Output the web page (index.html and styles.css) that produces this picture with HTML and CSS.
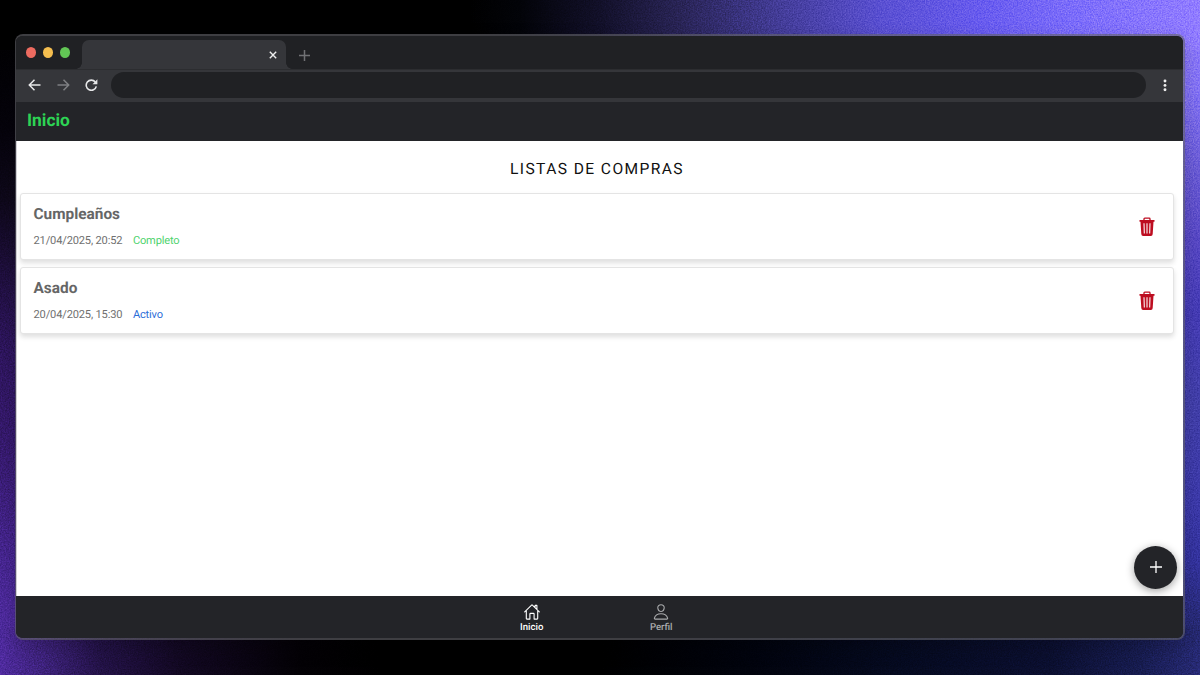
FILE: index.html
```html
<!DOCTYPE html>
<html lang="es">
<head>
<meta charset="utf-8">
<title>Inicio</title>
<link rel="stylesheet" href="styles.css">
</head>
<body>
<svg class="grain" width="1200" height="675" aria-hidden="true">
  <filter id="noise" x="0" y="0" width="100%" height="100%" color-interpolation-filters="sRGB">
    <feTurbulence type="fractalNoise" baseFrequency="0.75" numOctaves="2" seed="4"/>
    <feColorMatrix values="1.4 0 0 0 -.22  1.4 0 0 0 -.22  1.4 0 0 0 -.22  0 0 0 0 1"/>
  </filter>
  <rect width="1200" height="675" filter="url(#noise)"/>
</svg>
<div class="window">
  <div class="tabs">
    <div class="lights"><span class="light red"></span><span class="light yellow"></span><span class="light green"></span></div>
    <div class="tab">
      <svg width="8" height="8" viewBox="0 0 8 8"><path d="M.8.8l6.4 6.4M7.2.8L.8 7.2" stroke="#eee" stroke-width="1.4"/></svg>
    </div>
    <svg class="newtab" width="11" height="11" viewBox="0 0 11 11"><path d="M5.5 0v11M0 5.5h11" stroke="#707174" stroke-width="1.5"/></svg>
  </div>
  <div class="toolbar">
    <div class="controls">
      <svg width="13" height="12" viewBox="0 0 13 12" fill="none" stroke="#e6e7e8" stroke-width="1.5"><path d="M12.5 6H1.5M6.5.8L1.3 6l5.2 5.2"/></svg>
      <svg width="13" height="12" viewBox="0 0 13 12" fill="none" stroke="#7e7f82" stroke-width="1.5"><path d="M.5 6h11M6.5.8L11.7 6l-5.2 5.2"/></svg>
      <svg width="13" height="12" viewBox="0 0 13 12" fill="none" stroke="#e6e7e8" stroke-width="1.6"><path d="M10.3 3A5.1 5.1 0 1 0 11.3 7.4"/><path d="M12.4.3v5H7.5z" fill="#e6e7e8" stroke="none"/></svg>
    </div>
    <div class="address"></div>
    <svg class="dots" width="4" height="13" viewBox="0 0 4 13" fill="#f0f0f0"><circle cx="2" cy="2" r="1.45"/><circle cx="2" cy="6.4" r="1.45"/><circle cx="2" cy="10.8" r="1.45"/></svg>
  </div>
  <header class="header">Inicio</header>
  <main class="content">
    <h1 class="title">LISTAS DE COMPRAS</h1>
    <section class="list">
      <article class="card">
        <div>
          <h2 class="name">Cumpleaños</h2>
          <p class="meta"><span class="date">21/04/2025, 20:52</span><span class="complete">Completo</span></p>
        </div>
        <svg class="trash" width="16" height="20" viewBox="0 0 16 20"><path d="M5 3.200V2Q5 1.200 5.800 1.200h4.400q.8 0 .8.8v1.200" fill="none" stroke="#bd0d20" stroke-width="1.300"/><path d="M.5 3h15v1.700h-1L13.700 17q-.1 2-1.800 2H4.100q-1.700 0-1.800-2L1.500 4.700H.5z" fill="#bd0d20"/><path d="M5 6.200l.35 10.300M8 6.200v10.300M11 6.200l-.35 10.300" stroke="#f7dfe2" stroke-width="1.200"/></svg>
      </article>
      <article class="card">
        <div>
          <h2 class="name">Asado</h2>
          <p class="meta"><span class="date">20/04/2025, 15:30</span><span class="active">Activo</span></p>
        </div>
        <svg class="trash" width="16" height="20" viewBox="0 0 16 20"><path d="M5 3.200V2Q5 1.200 5.800 1.200h4.400q.8 0 .8.8v1.200" fill="none" stroke="#bd0d20" stroke-width="1.300"/><path d="M.5 3h15v1.700h-1L13.700 17q-.1 2-1.800 2H4.100q-1.700 0-1.800-2L1.500 4.700H.5z" fill="#bd0d20"/><path d="M5 6.200l.35 10.300M8 6.200v10.300M11 6.200l-.35 10.300" stroke="#f7dfe2" stroke-width="1.200"/></svg>
      </article>
    </section>
    <button class="add" aria-label="Agregar"><svg width="12" height="12" viewBox="0 0 12 12"><path d="M6 0v12M0 6h12" stroke="#fff" stroke-width="1.3"/></svg></button>
  </main>
  <nav class="nav">
    <a class="item current">
      <svg width="16" height="16" viewBox="0 0 16 16" fill="none" stroke="currentColor" stroke-width="1.1" stroke-linecap="round" stroke-linejoin="round"><path d="M2.300 7v7.500q0 .6.6.6h3V10q0-.6.6-.6h3q.6 0 .6.6v5.100h3q.6 0 .6-.6V7M15.300 7.800L8.400 1.100q-.4-.4-.8 0L.7 7.800M12.900 5.300V1.400h-1.800v2.100"/></svg>
      <span>Inicio</span>
    </a>
    <a class="item">
      <svg width="16" height="16" viewBox="0 0 16 16" fill="none" stroke="currentColor" stroke-width="1.1" stroke-linejoin="round"><path d="M11.200 3.900C11 6 9.600 7.500 8 7.500S5 6 4.800 3.900C4.700 2 6 .7 8 .7s3.300 1.300 3.200 3.200zM8 9.700c-3.200 0-5.900 1.700-6.600 4.400-.1.500.2 1 .7 1h11.800c.5 0 .8-.5.7-1C13.900 11.300 11.200 9.700 8 9.700z"/></svg>
      <span>Perfil</span>
    </a>
  </nav>
</div>
</body>
</html>
```

FILE: styles.css
```css
* { box-sizing: border-box; }

body {
  margin: 0;
  width: 1200px;
  height: 675px;
  padding: 34px 15px 35px;
  overflow: hidden;
  font-family: Roboto, sans-serif;
  text-rendering: geometricPrecision;
  background:
    linear-gradient(90deg, #000 0, #000 470px, #020308 520px, #121029 600px, #292456 680px, #443d99 780px, #5a50d2 880px, #695cef 980px, #7c6dfa 1070px, #927dff 1200px) 0 0 / 1200px 50px no-repeat,
    linear-gradient(90deg, #4f2b9f 0, #3b2177 50px, #231247 100px, #120822 180px, #030105 300px, #000 380px, #000 600px, #01030d 750px, #050a20 900px, #0b0f30 1050px, #171c50 1140px, #272a75 1200px) 0 100% / 1200px 48px no-repeat,
    linear-gradient(180deg, #000 0, #05030b 130px, #0e081a 200px, #241149 300px, #2e155e 350px, #371a70 450px, #472692 560px, #4f2b9f 627px) 0 0 / 50px 100% no-repeat,
    linear-gradient(180deg, #927dff 0, #8675f8 90px, #6b5cd8 170px, #5949c8 240px, #463cb8 310px, #4340ac 400px, #3d3aac 500px, #3433a0 560px, #272a75 627px) 100% 0 / 50px 100% no-repeat,
    #000;
}

.grain {
  position: absolute;
  top: 0;
  left: 0;
  mix-blend-mode: overlay;
  opacity: .26;
}

.window {
  position: relative;
  display: flex;
  flex-direction: column;
  height: 606px;
  border: 2px solid rgba(100, 100, 106, .62);
  border-left-width: 1.5px;
  border-radius: 8px;
  background: #202124;
  background-clip: padding-box;
  overflow: hidden;
  box-shadow: 0 8px 20px rgba(0, 0, 0, .2);
}

.tabs {
  display: flex;
  flex: 0 0 34px;
  padding: 4px 0 0 10px;
  border-bottom: 1px solid #2c2d30;
  background: #202124;
}

.lights { display: flex; gap: 7px; padding-top: 7px; width: 56px; }
.light { width: 10px; height: 10.5px; border-radius: 50%; }
.red { background: #ed6b60; }
.yellow { background: #f5be4f; }
.green { background: #62c655; }

.tab {
  display: flex;
  align-items: center;
  justify-content: flex-end;
  position: relative;
  width: 204px;
  height: 29px;
  padding-right: 9px;
  border-radius: 7px 7px 0 0;
  background: #35363a;
}

.tab::before, .tab::after {
  content: "";
  position: absolute;
  bottom: 0;
  width: 6px;
  height: 6px;
}
.tab::before { left: -6px; background: radial-gradient(circle at 0 0, transparent 5.5px, #35363a 6px); }
.tab::after { right: -6px; background: radial-gradient(circle at 100% 0, transparent 5.5px, #35363a 6px); }

.newtab { margin: 10px 0 0 13px; }

.toolbar {
  display: flex;
  align-items: center;
  flex: 0 0 32px;
  padding: 0 16px 2px 12px;
  background: #35363a;
}

.controls { display: flex; gap: 15.5px; width: 83px; }
.address { flex: 1; height: 26px; border-radius: 13px; background: #202124; }
.dots { margin-left: 17px; }

.header {
  flex: 0 0 39px;
  padding-left: 11px;
  background: #232428;
  color: #2dd354;
  font-size: 17.4px;
  font-weight: 700;
  line-height: 38px;
}

.content {
  flex: 1;
  position: relative;
  padding: 0 9px 0 4px;
  background: #fff;
  box-shadow: inset 1px 0 #d2d0d6;
}

.title {
  margin: 0;
  padding-top: 18px;
  height: 52px;
  color: #111;
  font-size: 15.6px;
  font-weight: 400;
  line-height: 20px;
  letter-spacing: 1.4px;
  text-align: center;
}

.list { display: flex; flex-direction: column; gap: 7px; }

.card {
  display: flex;
  align-items: center;
  justify-content: space-between;
  height: 67px;
  padding: 0 18px 0 12.5px;
  border: 1px solid #e4e4e4;
  border-radius: 3px;
  background: #fff;
  box-shadow: 0 3px 5px rgba(0, 0, 0, .13);
}

.name {
  margin: 0;
  color: #666;
  font-size: 15.4px;
  font-weight: 700;
  line-height: 18px;
}

.meta {
  display: flex;
  gap: 10.5px;
  margin: 11px 0 0;
  font-size: 11.1px;
  line-height: 14px;
  letter-spacing: -.16px;
}
.date { color: #707070; }
.complete { color: #4fd36e; }
.active { color: #2b6dd8; }

.add {
  position: absolute;
  right: 6px;
  bottom: 7.5px;
  display: flex;
  align-items: center;
  justify-content: center;
  width: 43px;
  height: 43px;
  padding: 0;
  border: 0;
  border-radius: 50%;
  background: #232428;
  box-shadow: 0 2px 8px rgba(0, 0, 0, .38);
}

.nav {
  display: flex;
  justify-content: center;
  flex: 0 0 42px;
  padding-right: 6px;
  background: #232428;
}

.item {
  display: flex;
  flex-direction: column;
  align-items: center;
  width: 129.5px;
  padding-top: 8px;
  color: #aaabad;
  font-size: 9.6px;
  font-weight: 500;
  line-height: 11px;
}
.item span { margin-top: 2px; }
.current { color: #fff; }
```
